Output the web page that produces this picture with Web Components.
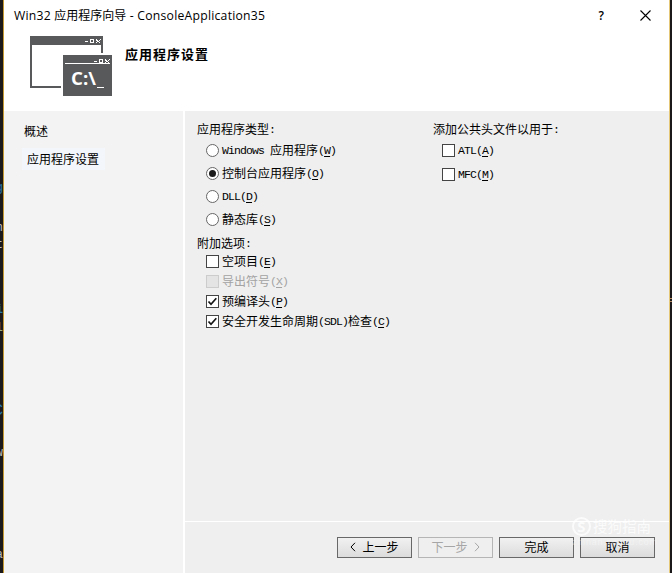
<!DOCTYPE html>
<html lang="zh-CN">
<head>
<meta charset="utf-8">
<title>Win32 应用程序向导</title>
<style>
body{margin:0;width:672px;height:573px;overflow:hidden;background:#1c191b;font:12px/16px "Noto Sans CJK SC",sans-serif;color:#000}
</style>
</head>
<body>
<wizard-desktop></wizard-desktop>
<script>
function define(name, html, setup){
  const t=document.createElement('template'); t.innerHTML=html;
  customElements.define(name, class extends HTMLElement{
    constructor(){super();this.attachShadow({mode:'open'}).append(t.content.cloneNode(true));}
    connectedCallback(){ if(setup) setup(this,this.shadowRoot); }
  });
}

/* Half-width Latin run inside CJK text: six pixels per character */
define('half-text', `<style>
:host{display:inline-block;font:11.5px/17px "Liberation Mono",monospace;letter-spacing:-.9px;white-space:pre;vertical-align:top}
::slotted(u){text-decoration:underline;text-underline-offset:2px;text-decoration-thickness:1px}
</style><slot></slot>`);

define('app-icon', `<style>:host{display:block;width:82px;height:60px}svg{display:block}text{font:bold 17px "Open Sans",sans-serif}</style>
<svg width="82" height="60" viewBox="0 0 82 60" shape-rendering="crispEdges">
<path fill="#58595b" d="M0 0H73V17H71V9H2V50H31V52H0Z"/>
<path fill="#fff" d="M55 5h3v1h-3zM60 3h4v4h-4zM66 3h1v1h1v1h1v-1h1v-1h1v1h-1v1h-1v1h1v1h-1v-1h-2v1h-1v-1h1v-1h-1v-1h-1z"/>
<path fill="#58595b" d="M61 4h2v2h-2zM33 19H82V60H33Z"/>
<path fill="#fff" d="M64 24h3v1h-3zM69 22h4v4h-4zM75 22h1v1h1v1h1v-1h1v-1h1v1h-1v1h-1v1h1v1h-1v-1h-2v1h-1v-1h1v-1h-1v-1h-1zM35 26h45v1H35zM67 50h7v1h-7z" transform="translate(0 1)"/>
<path fill="#58595b" d="M70 24h2v2h-2z"/>
<text x="41" y="49" fill="#fff" textLength="25" lengthAdjust="spacingAndGlyphs">C:\\</text>
</svg>`);

define('title-bar', `<style>
:host{display:flex;height:31px;align-items:center;padding:0 18px 0 10px;font:12.2px/18px "Open Sans","Noto Sans CJK SC",sans-serif;box-sizing:border-box}
.t{flex:1;white-space:pre;letter-spacing:.24px}.c{font-size:12px;letter-spacing:0}.q{font:600 12px/18px "Open Sans",sans-serif;margin-right:36px}svg{display:block}
</style><div class="t">Win32 <span class="c">应用程序向导</span> - ConsoleApplication35</div><div class="q">?</div>
<svg width="11" height="11" viewBox="0 0 11 11"><path d="M.5.5l10 10M10.5.5l-10 10" stroke="#000" stroke-width="1.1"/></svg>`);

define('wizard-header', `<style>
:host{display:flex;height:80px;padding:5px 26px 0;box-sizing:border-box;gap:13px}
h1{margin:9px 0 0;font:bold 13px/18px "Noto Sans CJK SC",sans-serif;letter-spacing:1px}
</style><app-icon></app-icon><h1>应用程序设置</h1>`);

define('side-nav', `<style>
:host{display:block;width:181px;box-sizing:border-box;background:#f3f3f3;padding:12px 18px;border-right:2px solid #fff}
div{width:max-content;line-height:16px}.a{padding:3px 6px 3px 5px;margin:9px 0 0 0;background:#f3f6fb}.f{padding-left:2px}
</style><div class="f">概述</div><div class="a">应用程序设置</div>`);

define('option-item', `<style>
:host{display:flex;align-items:center;gap:3px;height:var(--row,20px);padding-left:9px;white-space:pre}
:host([disabled]){color:#a3a3a3}
i{box-sizing:border-box;flex:none;width:13px;height:13px;border:1px solid #444;background:#fff;display:grid;place-items:center}
:host([radio]) i{border-radius:50%;border-color:#666}
:host([disabled]) i{border-color:#ccc;background:#e4e4e4}
b{width:7px;height:7px;border-radius:50%;background:#1b1b1b}
span{display:block;height:16px;line-height:16px;margin-bottom:var(--lift,0)}svg{display:block}
</style><i></i><span><slot></slot></span>`, (h,r)=>{
  if(h.hasAttribute('checked')) r.querySelector('i').innerHTML = h.hasAttribute('radio') ? '<b></b>' :
  '<svg width="11" height="11" viewBox="0 0 11 11"><path d="M1.5 5.5L4 8.3 9.3 2.2" fill="none" stroke="#151515" stroke-width="1.7"/></svg>';
});

define('option-group', `<style>:host{display:block}h2{font:inherit;margin:0;line-height:16px;height:16px}.b{padding-top:var(--gap,0)}</style>
<h2><slot name="title"></slot></h2><div class="b"><slot></slot></div>`);

define('wizard-button', `<style>
:host{display:flex;width:75px;height:21px;box-sizing:border-box;border:1px solid #686868;background:linear-gradient(#f1f1f1,#dcdcdc);align-items:center;justify-content:center;gap:6px;line-height:16px;padding-bottom:2px}
:host([disabled]){border-color:#b5b5b5;color:#a6a6a6;background:#efefef}
::slotted(svg){display:block}
</style><slot></slot>`);

define('settings-page', `<style>
:host{display:grid;grid-template-columns:236px 1fr;height:410px;padding:10px 0 0 12px;box-sizing:border-box;background:#efefef}
.r{--row:23px;--gap:2px;--lift:2px}.o{margin-top:4px}.k{--row:24px;--gap:1px}
</style>
<div><option-group class="r"><span slot="title">应用程序类型<half-text>:</half-text></span>
<option-item radio><half-text>Windows </half-text>应用程序<half-text>(<u>W</u>)</half-text></option-item>
<option-item radio checked>控制台应用程序<half-text>(<u>O</u>)</half-text></option-item>
<option-item radio><half-text>DLL(<u>D</u>)</half-text></option-item>
<option-item radio>静态库<half-text>(<u>S</u>)</half-text></option-item></option-group>
<option-group class="o"><span slot="title">附加选项<half-text>:</half-text></span>
<option-item>空项目<half-text>(<u>E</u>)</half-text></option-item>
<option-item disabled>导出符号<half-text>(<u>X</u>)</half-text></option-item>
<option-item checked>预编译头<half-text>(<u>P</u>)</half-text></option-item>
<option-item checked>安全开发生命周期<half-text>(SDL)</half-text>检查<half-text>(<u>C</u>)</half-text></option-item></option-group></div>
<div><option-group class="k"><span slot="title">添加公共头文件以用于<half-text>:</half-text></span>
<option-item><half-text>ATL(<u>A</u>)</half-text></option-item>
<option-item><half-text>MFC(<u>M</u>)</half-text></option-item></option-group></div>`);

define('wizard-footer', `<style>
:host{display:flex;gap:6px;justify-content:flex-end;padding:15px 14px 0 0;border-top:1px solid #fff;background:#efefef;height:52px;box-sizing:border-box}
</style>
<wizard-button><svg width="6" height="10" viewBox="0 0 6 10"><path d="M5 .8L1 5l4 4.2" fill="none" stroke="currentColor"/></svg>上一步</wizard-button>
<wizard-button disabled>下一步<svg width="6" height="10" viewBox="0 0 6 10"><path d="M1 .8L5 5 1 9.2" fill="none" stroke="currentColor"/></svg></wizard-button>
<wizard-button>完成</wizard-button><wizard-button>取消</wizard-button>`);

define('water-mark', `<style>
:host{position:absolute;left:572px;top:516px;width:86px;color:#fff;opacity:.75}
.a{display:flex;align-items:center;gap:2px;font:14.5px/20px "Noto Sans CJK SC",sans-serif;white-space:nowrap}
.s{box-sizing:border-box;width:19px;height:19px;border:2px solid #fff;border-radius:50%;font:bold 15px/15px "Open Sans",sans-serif;text-align:center}
.u{font:9px/12px "Liberation Sans",sans-serif;letter-spacing:.8px;opacity:.5;white-space:nowrap}
</style><div class="a"><div class="s">S</div>搜狗指南</div><div class="u">zhinan.sogou.com</div>`);

/* Slivers of the editor that show beside the dialog */
define('editor-sliver', `<style>
:host{position:absolute;left:0;top:0;width:3px;height:573px;overflow:hidden;font:12px/14px "Liberation Mono",monospace;color:#bbb}
span{position:absolute;right:0}.b{color:#2878a8}
</style><span class="b" style="top:181px">g</span><span style="top:221px">n</span><span style="top:238px">t</span>
<span class="b" style="top:303px;font-weight:bold">i</span><span style="top:321px;color:#9aaa78">l</span>
<span class="b" style="top:404px;font-size:16px">C</span><span style="top:446px">w</span><span style="top:463px;color:#777">,</span><span style="top:548px">a</span>`);

define('wizard-desktop', `<style>
:host{display:block;position:relative;width:672px;height:573px}
.w{width:665px;height:573px;margin-left:3px;border:solid;border-width:0 1px;border-color:#c49a35 #e5c878;border-color:#c49a35 #e5c878 #c49a35 #c49a35;background:#fff}
.m{display:flex;height:462px}.p{flex:1;display:flex;flex-direction:column}
.e{position:absolute;left:670px;top:298px;width:2px;height:4px;border:solid #b58b61;border-width:1px 0;box-sizing:border-box}
</style><editor-sliver></editor-sliver><div class="w"><title-bar></title-bar><wizard-header></wizard-header>
<div class="m"><side-nav></side-nav><div class="p"><settings-page></settings-page><wizard-footer></wizard-footer></div></div></div><div class="e"></div><water-mark></water-mark>`);
</script>
</body>
</html>
